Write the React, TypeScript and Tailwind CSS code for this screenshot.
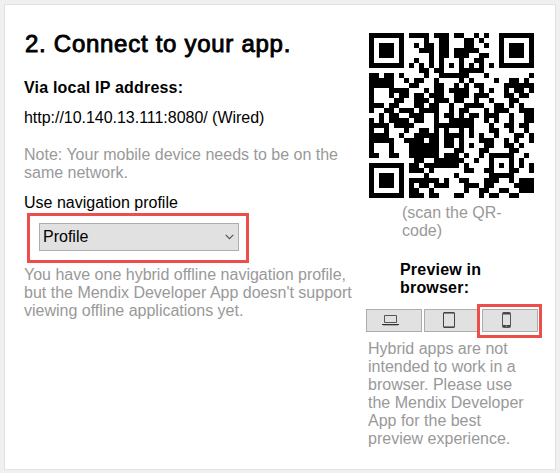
import React from "react";

const QR_ROWS = [
  "111111101111011101100101001111111",
  "100000100001001100011010001000001",
  "101110100101101100011001001011101",
  "101110100011101101111100001011101",
  "101110100000101101110011001011101",
  "100000100100101000100110001000001",
  "111111101010101010101010101111111",
  "000000000011011000111110000000000",
  "110110100001001111110001000000001",
  "111110010110010000101000010011010",
  "111110001100011001010110000111111",
  "100011110001011011110010100101101",
  "100010110110111001110111000110110",
  "100001100111011101100100100011000",
  "111011000110110010011110011010100",
  "100110111011110010110001011100111",
  "001011001110010110101101110010011",
  "101011110110010011111001010010011",
  "111101111000011111111000100110110",
  "100100010011010100101000110010010",
  "111100100111110111101010010001101",
  "111110011110110110100011100101001",
  "100010001111110110101001100110100",
  "100010001111110001100011000011000",
  "110011001111110111010010111110010",
  "000000000110011111100100100010100",
  "111111101101111111010000101010101",
  "100000101110100000011001100011001",
  "101110100001000001000000111110000",
  "101110101111110100110001110010111",
  "101110101011011100011101100001111",
  "100000101100100000010011001100111",
  "111111101110110001100010110011000",
];

const qrPath = QR_ROWS.map((row, y) =>
  [...row].map((cell, x) => (cell === "1" ? `M${x * 5} ${y * 5}h5v5h-5z` : "")).join("")
).join("");

function LaptopIcon() {
  return (
    <svg width="17" height="13" viewBox="0 0 17 13" className="block" fill="none">
      <path d="M2.5 1.5h12v7h-12z" stroke="#555" />
      <path d="M0 10.5h17" stroke="#333" />
      <path d="M1 11.5h15" stroke="#aaa" />
    </svg>
  );
}

function TabletIcon() {
  return (
    <svg width="13" height="17" viewBox="0 0 13 17" className="block" fill="none">
      <rect x="0.5" y="0.5" width="11" height="15" rx="0.5" stroke="#444" />
      <path d="M1 1.5h10M1 14.5h10" stroke="#888" />
    </svg>
  );
}

function PhoneIcon() {
  return (
    <svg width="9" height="17" viewBox="0 0 9 17" className="block" fill="none">
      <rect x="0.5" y="0.5" width="8" height="15" rx="0.8" stroke="#555" />
      <path d="M1 1.5h7M1 14h7" stroke="#444" strokeWidth="1.8" />
      <path d="M3.8 14.2h1.4" stroke="#bbb" />
    </svg>
  );
}

function DeviceButton({ label, children }: { label: string; children: React.ReactNode }) {
  return (
    <button aria-label={label} className="flex h-[23px] w-14 items-center border border-[#adadad] bg-[#e1e1e1]">
      {children}
    </button>
  );
}

export default function App() {
  return (
    <div className="h-[473px] w-[560px] overflow-hidden bg-[#f0f0f0] pt-1 pl-1 font-['Liberation_Sans',Arial,sans-serif] text-base leading-[18px] text-black">
      <main className="flex h-[466px] w-[552px] border border-[#e2e2e2] bg-white">
        <section className="w-[361px] shrink-0 pl-[19px] whitespace-nowrap">
          <h1 className="mt-[25px] pl-px text-2xl leading-7 font-normal tracking-[0.72px] [-webkit-text-stroke:0.9px_black]">
            2. Connect to your app.
          </h1>
          <h2 className="mt-[21px] font-bold tracking-[0.2px]">Via local IP address:</h2>
          <p className="mt-3 tracking-[-0.03px]">http://10.140.13.111:8080/ (Wired)</p>
          <p className="mt-[19px] text-[#999]">
            Note: Your mobile device needs to be on the
            <br />
            same network.
          </p>
          <p className="mt-3">Use navigation profile</p>
          <div className="mt-px ml-[3px] h-[50px] w-[222px] border-[3px] border-[#ee4e49] pt-[7px] pl-[9px]">
            <button className="flex h-7 w-[200px] items-center justify-between border border-[#adadad] bg-[#e1e1e1] pr-1 pl-[3px]">
              <span>Profile</span>
              <svg width="9" height="6" viewBox="0 0 9 6" fill="none">
                <path d="M.7.8 4.5 4.6 8.3.8" stroke="#555" strokeWidth="1.2" />
              </svg>
            </button>
          </div>
          <p className="mt-[3px] text-[#999]">
            You have one hybrid offline navigation profile,
            <br />
            but the Mendix Developer App doesn't support
            <br />
            viewing offline applications yet.
          </p>
        </section>
        <aside className="w-[184px] shrink-0 whitespace-nowrap">
          <svg width="165" height="165" viewBox="0 0 165 165" className="mt-7 ml-[3px] block" shapeRendering="crispEdges">
            <path d={qrPath} />
          </svg>
          <p className="mt-1.5 ml-9 text-[#999]">
            (scan the QR-
            <br />
            code)
          </p>
          <h2 className="mt-[21px] ml-[34px] font-bold tracking-[0.2px]">
            Preview in
            <br />
            browser:
          </h2>
          <div className="mt-[7px] flex h-[34px]">
            <div className="pt-[5px] [&>button]:pl-[15px]">
              <DeviceButton label="Desktop"><LaptopIcon /></DeviceButton>
            </div>
            <div className="ml-[2px] pt-[5px] [&>button]:pl-[18px]">
              <DeviceButton label="Tablet"><TabletIcon /></DeviceButton>
            </div>
            <div className="-ml-[3px] h-[34px] w-[65px] border-[3px] border-[#ee4e49] pt-[2px] pl-[2px] [&>button]:pl-[19px]">
              <DeviceButton label="Phone"><PhoneIcon /></DeviceButton>
            </div>
          </div>
          <p className="mt-[2px] ml-[2px] text-[#999]">
            Hybrid apps are not
            <br />
            intended to work in a
            <br />
            browser. Please use
            <br />
            the Mendix Developer
            <br />
            App for the best
            <br />
            preview experience.
          </p>
        </aside>
      </main>
    </div>
  );
}
